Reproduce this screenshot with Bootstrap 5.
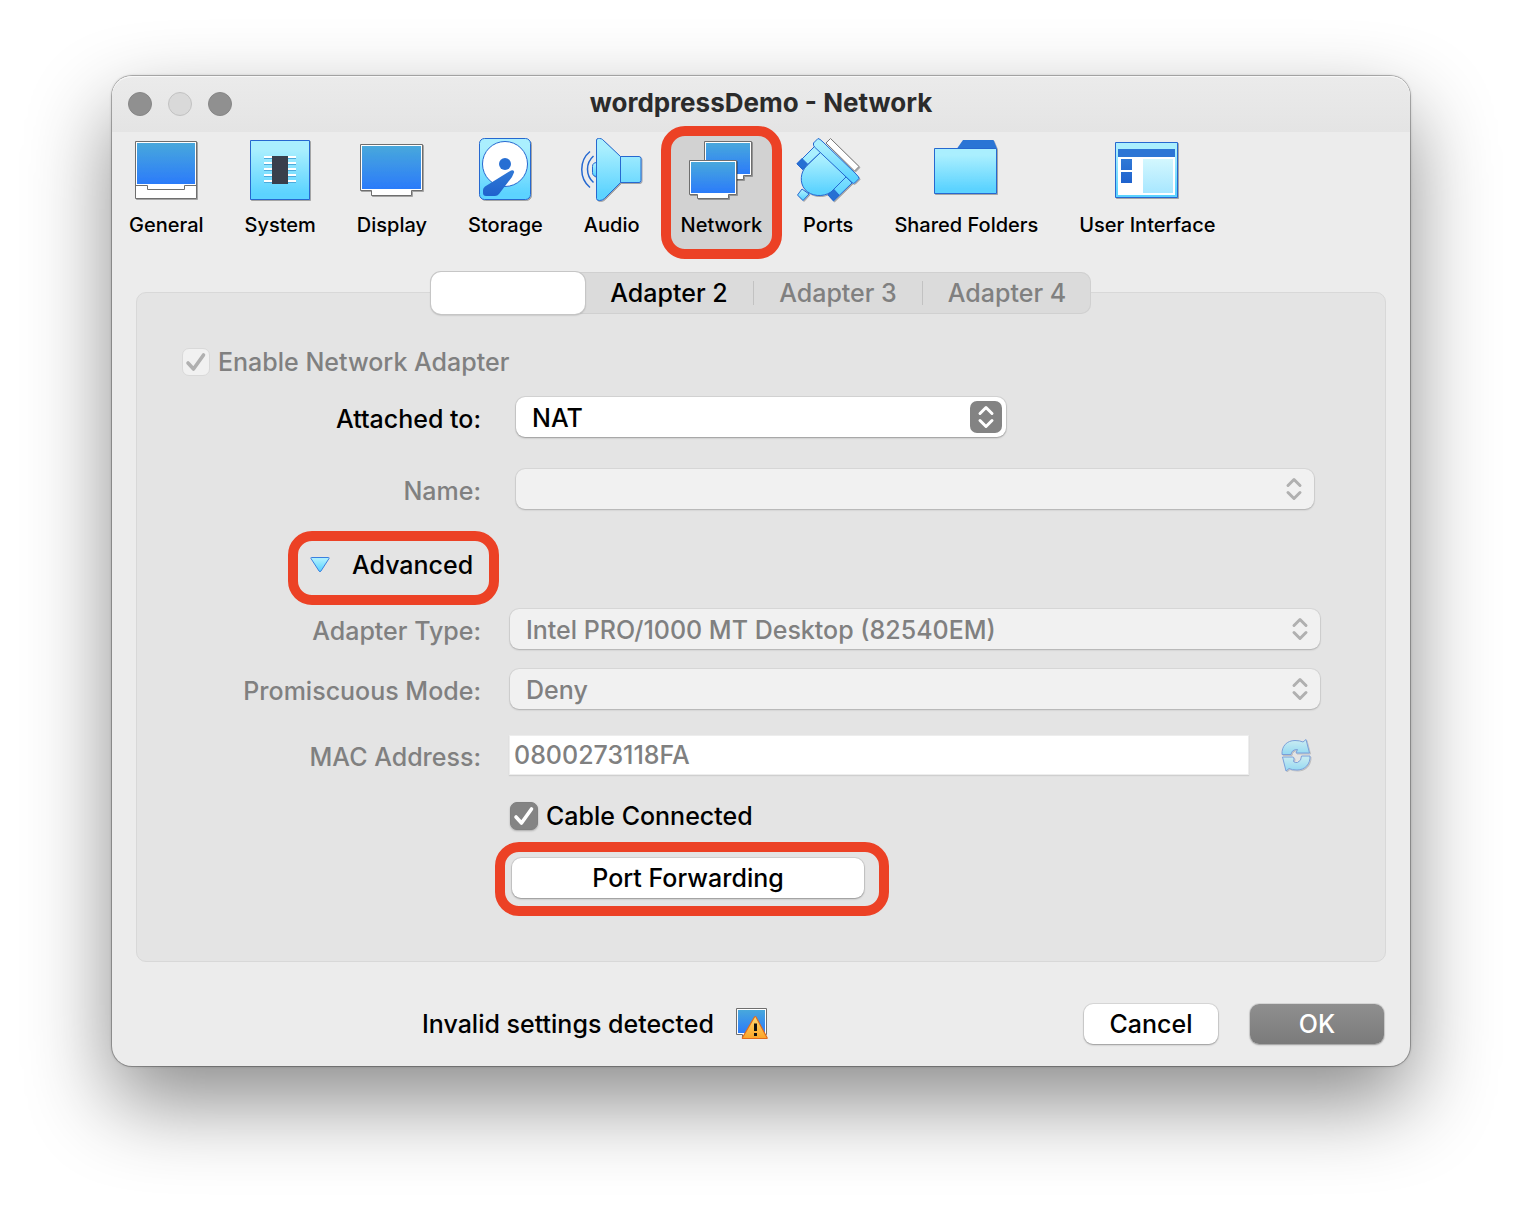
<!DOCTYPE html>
<html lang="en">
<head>
<meta charset="utf-8">
<meta name="viewport" content="width=device-width, initial-scale=1">
<title>wordpressDemo - Network</title>
<link href="https://cdn.jsdelivr.net/npm/bootstrap@5.3.0/dist/css/bootstrap.min.css" rel="stylesheet">
<style>
body{font-family:Inter,Roboto,"Liberation Sans",sans-serif;font-size:25px;font-weight:500;line-height:40px;color:#000;background:#fff;padding:76px 112px 148px}
.win{background:#ececec;border-radius:20px;box-shadow:0 0 0 1px rgba(0,0,0,.22),0 0 3px rgba(0,0,0,.3),0 36px 84px rgba(0,0,0,.46);min-width:1200px}
.titlebar{height:56px;padding:0 16px;border-radius:20px 20px 0 0;background:linear-gradient(#ebebeb,#e4e4e4);box-shadow:inset 0 1px 0 #f8f8f8}
.win-title{font-size:26px;font-weight:700;color:#2b2b2b;line-height:52px;margin:0 0 2px}
.lights{width:104px;gap:16px}
.lights button{width:24px;height:24px;border-radius:50%;border:1px solid #868686;background:#909090;padding:0}
.lights .dim{background:#d9d9d9;border-color:#c2c2c2}
.tools{padding:0 7px;gap:21px}
.tool{position:relative;border:0;background:none;padding:6px 10px 10px;font-size:20px;font-weight:500;line-height:36px;color:#000;white-space:nowrap}
.tool svg{width:64px;height:64px;flex:none;margin:0 -10px 5px;overflow:visible}
.tool.on{background:#d2d2d2}
.ring{position:absolute;border:10px solid #ec4125;border-radius:24px;pointer-events:none}
.ring-tool{inset:-6px -10px -6px}
.pane{margin:39px 24px 0;background:#e4e4e4;border:1px solid #d8d8d8;border-radius:10px;padding-bottom:63px}
.seg{height:42px;margin-top:-21px;background:#dbdbdb;border-radius:10px;box-shadow:inset 0 0 0 1px #d0d0d0}
.seg button{border:0;background:none;width:168px;padding:0;line-height:42px;color:#000}
.seg button,.push.btn,.expander{font-weight:500}
.seg button:disabled{color:#808080}
.seg .first{width:154px;background:#fff;border-radius:10px;box-shadow:0 0 0 1px #c6c6c6,0 1px 2px rgba(0,0,0,.35)}
.seg .bar{width:1px;height:24px;background:#c2c2c2}
.enable{padding:28px 0 0 45px;gap:8px}
.enable label,.off{color:#808080}
.tick.form-check-input{width:28px;height:28px;margin:0;border-radius:7px;opacity:1;border:1px solid #d9d9d9;background-color:#f1f1f1;flex:none;background-size:28px 28px;
 background-image:url("data:image/svg+xml,%3csvg xmlns='http://www.w3.org/2000/svg' viewBox='0 0 28 28'%3e%3cpath fill='none' stroke='%23b0b0b0' stroke-width='3.6' stroke-linecap='round' stroke-linejoin='round' d='M6 15l5.500 6L21.500 7'/%3e%3c/svg%3e")}
.tick.form-check-input.dark{border-color:#808080;background-color:#848484;box-shadow:0 1px 2px rgba(0,0,0,.25);
 background-image:url("data:image/svg+xml,%3csvg xmlns='http://www.w3.org/2000/svg' viewBox='0 0 28 28'%3e%3cpath fill='none' stroke='%23fff' stroke-width='3.6' stroke-linecap='round' stroke-linejoin='round' d='M6 15l5.500 6L21.500 7'/%3e%3c/svg%3e")}
.enable label,.cable label{opacity:1!important}
.line{padding-right:65px}
.line>.cap{width:344px;flex:none;text-align:right;margin:0 29px -4px 0;line-height:44px}
.line .inset{margin:0 6px}
.popup.form-select{height:40px;border:0;border-radius:9px;padding:1px 40px 0 16px;font-size:25px;font-weight:500;line-height:40px;color:#000;background-color:#fff;box-shadow:0 0 0 1px rgba(0,0,0,.07),0 1px 2px rgba(0,0,0,.28);background-position:right 4px center;background-size:32px 32px;
 background-image:url("data:image/svg+xml,%3csvg xmlns='http://www.w3.org/2000/svg' viewBox='0 0 32 32'%3e%3crect width='32' height='32' rx='7' fill='%23838383'/%3e%3cpath fill='none' stroke='%23fff' stroke-width='3' stroke-linecap='round' stroke-linejoin='round' d='M10 12.500l6-6 6 6M10 19.500l6 6 6-6'/%3e%3c/svg%3e")}
.popup.form-select:disabled{background-color:#f1f1f1;color:#808080;opacity:1;box-shadow:0 0 0 1px rgba(0,0,0,.05),0 1px 2px rgba(0,0,0,.2);
 background-image:url("data:image/svg+xml,%3csvg xmlns='http://www.w3.org/2000/svg' viewBox='0 0 32 32'%3e%3cpath fill='none' stroke='%23b0b0b0' stroke-width='3' stroke-linecap='round' stroke-linejoin='round' d='M10 12.500l6-6 6 6M10 19.500l6 6 6-6'/%3e%3c/svg%3e")}
.narrow.form-select{width:490px}
.mac.form-control{height:38px;border:0;border-radius:0;padding:0 4px;font-size:25px;font-weight:500;line-height:38px;box-shadow:0 0 0 1px #ededed,0 1px 1px 1px #cfcfcf;color:#808080;background:#fff;opacity:1}
.expander{position:relative;border:0;background:none;padding:0 16px 0 12px;margin-left:161px;color:#000;line-height:40px}
.expander svg{width:20px;height:16px;margin-right:22px;display:block}
.ring-adv{inset:-14px -10px -20px}
.push{height:40px;border:0;border-radius:9px;background:#fff;color:#000;font-size:25px;line-height:38px;padding:0;box-shadow:0 0 0 1px rgba(0,0,0,.08),0 1px 2px rgba(0,0,0,.3)}
.push:hover{background:#fff}
.pf{width:352px;position:relative;margin-left:2px}
.ring-pf{inset:-16px -25px -18px -17px}
.refresh{border:0;background:none;padding:0;margin:0 8px 0 32px;width:32px;height:34px}
.foot{padding:42px 26px 22px 310px}
.foot .push{width:134px}
.foot .main{background:linear-gradient(#8f8f8f,#7b7b7b);color:#fff;margin-left:32px}
.alert-icon{margin-left:21px}
.g0{margin-top:15px}.g1{margin-top:20px}.g2{margin-top:32px}.g3{margin-top:36px}.g4{margin-top:24px}.g5{margin-top:26px}.g6{margin-top:21px}.g7{margin-top:22px}
</style>
</head>
<body>
<svg width="0" height="0" class="position-absolute" aria-hidden="true"><defs>
<linearGradient id="scr" x1="0" y1="0" x2="0" y2="1"><stop offset="0" stop-color="#48a8dc"/><stop offset="1" stop-color="#2b7bfa"/></linearGradient>
<linearGradient id="cy" x1="0" y1="0" x2="0" y2="1"><stop offset=".15" stop-color="#aaeffe"/><stop offset=".9" stop-color="#5cd3ff"/></linearGradient>
<linearGradient id="nv" x1="0" y1="0" x2="0" y2="1"><stop offset="0" stop-color="#3079d6"/><stop offset="1" stop-color="#1f62cd"/></linearGradient>
<linearGradient id="pale" x1="0" y1="0" x2="0" y2="1"><stop offset="0" stop-color="#d3f7fe"/><stop offset="1" stop-color="#a8e7ff"/></linearGradient>
<linearGradient id="warn" x1="0" y1="0" x2="0" y2="1"><stop offset="0" stop-color="#ffd86e"/><stop offset="1" stop-color="#fba428"/></linearGradient>
<filter id="sh" x="-10%" y="-10%" width="125%" height="125%"><feDropShadow dx="1" dy="1" stdDeviation=".3" flood-color="#000" flood-opacity=".3"/></filter>
</defs></svg>
<main class="win">
  <header class="titlebar d-flex align-items-center justify-content-between">
    <div class="lights d-flex"><button type="button" aria-label="Close"></button><button type="button" class="dim" aria-label="Minimize"></button><button type="button" aria-label="Zoom"></button></div>
    <h1 class="win-title">wordpressDemo - Network</h1>
    <div class="lights"></div>
  </header>

  <nav class="tools d-flex" aria-label="Settings pages">
    <button type="button" class="tool d-flex flex-column align-items-center"><svg viewBox="0 0 64 64"><g filter="url(#sh)"><path d="M1.500 3.500h61v57h-61z" fill="#fff" stroke="#6e6e6e"/><path d="M3 5h58v41H3z" fill="url(#scr)"/><path d="M1.500 47.500h12v4h37v-4h12" fill="none" stroke="#6e6e6e"/></g></svg>General</button>
    <button type="button" class="tool d-flex flex-column align-items-center"><svg viewBox="0 0 64 64"><g filter="url(#sh)"><path d="M2.500 2.500h59v59h-59z" fill="url(#cy)" stroke="#2568d0"/></g><path d="M16 19h32M16 25h32M16 31h32M16 37h32M16 43h32" stroke="#fff" stroke-width="2"/><path d="M16 20.500h32M16 26.500h32M16 32.500h32M16 38.500h32M16 44.500h32" stroke="#4eaadb"/><path d="M24 18h16v28H24z" fill="#393f4c"/></svg>System</button>
    <button type="button" class="tool d-flex flex-column align-items-center"><svg viewBox="0 0 64 64"><g filter="url(#sh)"><path d="M.5 6.500h62v46h-11v5h-40v-5H.5z" fill="#fff" stroke="#6e6e6e"/><path d="M2 8h59v43H2z" fill="url(#scr)"/></g></svg>Display</button>
    <button type="button" class="tool d-flex flex-column align-items-center"><svg viewBox="0 0 64 64"><g filter="url(#sh)"><rect x="6.500" y=".5" width="51" height="61" rx="5" fill="url(#cy)" stroke="#2568d0"/></g><circle cx="32" cy="26" r="22.500" fill="#fff" stroke="#2568d0"/><circle cx="32" cy="26" r="6" fill="#276fd3"/><path d="M38 32.500q3-1 3.200 1.500L39 39 26 56q-1.500 2-4 2H13q-3 0-3-3v-3q0-2 2-3.500z" fill="url(#nv)"/></svg>Storage</button>
    <button type="button" class="tool d-flex flex-column align-items-center"><svg viewBox="0 0 64 64"><g filter="url(#sh)" stroke="#2568d0"><path d="M17 24.500q-4.500 0-4.500 4v6q0 4 4.500 4" fill="url(#cy)"/><path d="M16.500 2q0-1.500 2-1.500h1q2 0 3 1l18 17H59q2 0 2 2v22q0 2-2 2H40.500l-16 16q-2 2-5 2-3 0-3-2z" fill="url(#cy)"/><path d="M40.500 18.500v26" fill="none"/></g><path d="M13.500 18c-8 7-8 19.500 0 26.500M10 13.500c-11 9-11 27 0 36" fill="none" stroke="#2568d0" stroke-width="1.500"/></svg>Audio</button>
    <button type="button" class="tool on d-flex flex-column align-items-center" aria-current="page"><svg viewBox="0 0 64 64"><g filter="url(#sh)"><path d="M15.500 3.500h47v34h-8v4h-30v-4h-9z" fill="#fff" stroke="#6e6e6e"/><path d="M17 5h44v31H17z" fill="url(#scr)"/></g><g filter="url(#sh)"><path d="M.5 22.500h47v34h-8v4h-31v-4h-8z" fill="#fff" stroke="#6e6e6e"/><path d="M2 24h44v31H2z" fill="url(#scr)"/></g></svg>Network<span class="ring ring-tool"></span></button>
    <button type="button" class="tool d-flex flex-column align-items-center"><svg viewBox="0 0 64 64"><g filter="url(#sh)" stroke="#2568d0" stroke-linejoin="round"><path d="M34.500.5 63 28.500 58.500 33 30 5z" fill="#fff" stroke="#777"/><path d="M19 8 1 26l5.500 5.500L25 14zM56 45 37.500 63 32 57l18-18z" fill="url(#cy)"/><path d="M6 20.500 1 25.500l5.500 6 5-5.500zM37.500 51 32 56.500l5.500 6 5.500-5.500z" fill="#276fd3"/><path d="M6 51 1.500 57 7 62.500l6-6.500z" fill="url(#cy)"/><path d="M25 14 11 27.500C4 34 3.500 45 9 51.500c6 7 18 8 26 2.500l15-15z" fill="url(#cy)"/><path d="M17.500 5 22 .5q1.500 0 5 3.500l33 32q3 3 3 4.500L58.500 45q-1 1-2.500-.5L18.500 9q-1.500-1.500-1-4z" fill="url(#cy)"/></g></svg>Ports</button>
    <button type="button" class="tool d-flex flex-column align-items-center"><svg viewBox="0 0 64 64"><g filter="url(#sh)"><path d="M23 10.500 29 2h30.500l3.500 8.500z" fill="#2c75d5"/><path d="M.5 10.500h62v45H.5z" fill="url(#cy)" stroke="#2568d0"/></g></svg>Shared Folders</button>
    <button type="button" class="tool d-flex flex-column align-items-center"><svg viewBox="0 0 64 64"><g filter="url(#sh)"><path d="M.5 4.500h62v55H.5z" fill="url(#cy)" stroke="#2568d0"/></g><path d="M3 19h57v38H3z" fill="#fff"/><path d="M3 11h57v8H3z" fill="#2c75d5"/><path d="M6 21h11v11H6zM6 34h11v11H6z" fill="url(#nv)"/><path d="M28 21h30v34H28z" fill="url(#pale)"/></svg>User Interface</button>
  </nav>

  <section class="pane">
    <div class="d-flex justify-content-center">
      <div class="seg d-flex align-items-center" role="tablist">
        <button type="button" class="first align-self-stretch" role="tab" aria-label="Adapter 1" aria-selected="true"></button>
        <button type="button" role="tab">Adapter 2</button><span class="bar"></span>
        <button type="button" role="tab" disabled>Adapter 3</button><span class="bar"></span>
        <button type="button" role="tab" disabled>Adapter 4</button>
      </div>
    </div>
    <form>
      <div class="enable d-flex align-items-center">
        <input class="form-check-input tick" type="checkbox" id="enable" checked disabled>
        <label for="enable">Enable Network Adapter</label>
      </div>
      <div class="line d-flex g0">
        <label class="cap" for="attached">Attached to:</label>
        <div class="inset"><select class="form-select popup narrow" id="attached"><option>NAT</option></select></div>
      </div>
      <div class="line d-flex g2">
        <label class="cap off" for="name">Name:</label>
        <div class="inset flex-grow-1"><select class="form-select popup" id="name" disabled><option></option></select></div>
      </div>
      <div class="d-flex g3">
        <button type="button" class="expander d-flex align-items-center" aria-expanded="true"><svg viewBox="0 0 20 16"><path d="M1.500.5h17q1 0 .5 1L11 14q-1 1.500-2 0L1 1.500q-.5-1 .5-1z" fill="url(#cy)" stroke="#3a7fe0"/></svg>Advanced<span class="ring ring-adv"></span></button>
      </div>
      <div class="line d-flex g4">
        <label class="cap off" for="type">Adapter Type:</label>
        <select class="form-select popup" id="type" disabled><option>Intel PRO/1000 MT Desktop (82540EM)</option></select>
      </div>
      <div class="line d-flex g1">
        <label class="cap off" for="mode">Promiscuous Mode:</label>
        <select class="form-select popup" id="mode" disabled><option>Deny</option></select>
      </div>
      <div class="line d-flex g5 align-items-center">
        <label class="cap off" for="mac">MAC Address:</label>
        <input class="form-control mac" type="text" id="mac" value="0800273118FA" disabled>
        <button type="button" class="refresh flex-shrink-0 d-flex" disabled aria-label="New address"><svg width="32" height="34" viewBox="0 0 32 34"><g filter="url(#sh)" fill="url(#cy)" stroke="#2568d0" opacity=".55" stroke-linejoin="round"><path d="M2 16.500C1.500 8 7 2.500 15 2.500q5 0 8 1.500L26 1.500l3.500 13.500H16l1.500-3.500q-6 0-6.500 5z"/><path d="M30 18C30.500 26 25 32 17 32q-5 0-8-1.500L6 33 2.500 19H12q3-.5 1.500 4.500 1.500 1.500 4 1 4-1.500 4-6.500z"/></g></svg></button>
      </div>
      <div class="line d-flex g6">
        <span class="cap"></span>
        <div class="cable d-flex align-items-center gap-2"><input class="form-check-input tick dark" type="checkbox" id="cable" checked><label for="cable">Cable Connected</label></div>
      </div>
      <div class="line d-flex g7">
        <span class="cap"></span>
        <button type="button" class="btn push pf">Port Forwarding<span class="ring ring-pf"></span></button>
      </div>
    </form>
  </section>

  <footer class="foot d-flex align-items-center">
    <span>Invalid settings detected</span>
    <svg class="alert-icon" width="34" height="34" viewBox="0 0 34 34"><path d="M1.500 1.500h30v26h-5v3h-19v-3h-6z" fill="#fff" stroke="#6e6e6e"/><path d="M3 3h27v23H3z" fill="url(#scr)"/><path d="M19.500 10 7.500 30.500q-.5 1 .5 1h23.500q1 0 .5-1L21 10q-.8-1-1.500 0z" fill="url(#warn)" stroke="#e06a1c" stroke-width="1.200"/><path d="M20.500 16.500v7.500M20.500 26v3" stroke="#111" stroke-width="3"/></svg>
    <button type="button" class="btn push ms-auto">Cancel</button>
    <button type="button" class="btn push main">OK</button>
  </footer>
</main>
<script src="https://cdn.jsdelivr.net/npm/bootstrap@5.3.0/dist/js/bootstrap.bundle.min.js"></script>
</body>
</html>
